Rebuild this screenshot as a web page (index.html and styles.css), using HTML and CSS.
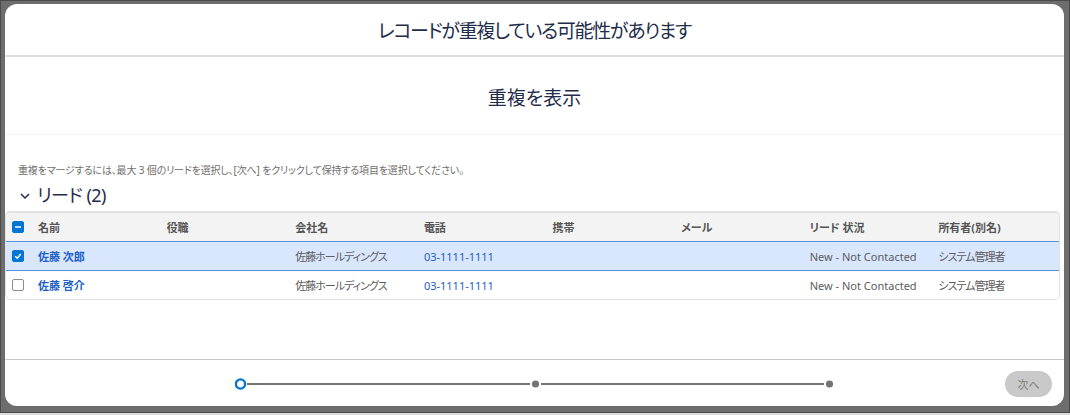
FILE: index.html
```html
<!DOCTYPE html>
<html lang="ja">
<head>
    <meta charset="UTF-8">
    <meta name="viewport" content="width=device-width, initial-scale=1.0">
    <title>重複を表示</title>
    <link rel="stylesheet" href="styles.css">
</head>
<body>
    <div class="screen">
        <div class="modal">
            <header class="modal-header">
                <h2>レコードが重複している可能性があります</h2>
            </header>
            <div class="step-title">
                <h3>重複を表示</h3>
            </div>
            <div class="modal-body">
                <p class="hint">重複をマージするには、最大 3 個のリードを選択し、[次へ] をクリックして保持する項目を選択してください。</p>
                <div class="section-title">
                    <svg class="chevron" width="12" height="12" viewBox="0 0 12 12"><path d="M2 4 L6 8 L10 4" fill="none" stroke="#1f2d4a" stroke-width="1.5"/></svg>
                    <span>リード (2)</span>
                </div>
                <div class="table">
                    <div class="row head">
                        <div class="cell check"><span class="box on"><svg width="12" height="12" viewBox="0 0 12 12"><path d="M3 6 H9" stroke="#fff" stroke-width="1.6"/></svg></span></div>
                        <div class="cell">名前</div>
                        <div class="cell">役職</div>
                        <div class="cell">会社名</div>
                        <div class="cell">電話</div>
                        <div class="cell">携帯</div>
                        <div class="cell">メール</div>
                        <div class="cell">リード 状況</div>
                        <div class="cell">所有者(別名)</div>
                    </div>
                    <div class="row selected">
                        <div class="cell check"><span class="box on"><svg width="12" height="12" viewBox="0 0 12 12"><path d="M3.2 6.2 L5.2 8.2 L8.8 4" fill="none" stroke="#fff" stroke-width="1.5"/></svg></span></div>
                        <div class="cell name">佐藤 次郎</div>
                        <div class="cell"></div>
                        <div class="cell kana">佐藤ホールディングス</div>
                        <div class="cell phone">03-1111-1111</div>
                        <div class="cell"></div>
                        <div class="cell"></div>
                        <div class="cell">New - Not Contacted</div>
                        <div class="cell kana">システム管理者</div>
                    </div>
                    <div class="row">
                        <div class="cell check"><span class="box"></span></div>
                        <div class="cell name">佐藤 啓介</div>
                        <div class="cell"></div>
                        <div class="cell kana">佐藤ホールディングス</div>
                        <div class="cell phone">03-1111-1111</div>
                        <div class="cell"></div>
                        <div class="cell"></div>
                        <div class="cell">New - Not Contacted</div>
                        <div class="cell kana">システム管理者</div>
                    </div>
                </div>
            </div>
            <footer class="modal-footer">
                <div></div>
                <svg class="progress" width="600" height="14" viewBox="0 0 600 14">
                    <line x1="12" y1="7" x2="295" y2="7" stroke="#747474" stroke-width="2"/>
                    <line x1="306" y1="7" x2="589" y2="7" stroke="#747474" stroke-width="2"/>
                    <circle cx="5.5" cy="7" r="4.6" fill="#fff" stroke="#0176d3" stroke-width="2.4"/>
                    <circle cx="300.5" cy="7" r="3.6" fill="#747474"/>
                    <circle cx="594.5" cy="7" r="3.6" fill="#747474"/>
                </svg>
                <button class="next" disabled>次へ</button>
            </footer>
        </div>
    </div>
</body>
</html>
```

FILE: styles.css
```css
body {
    margin: 0;
    background-color: #dcdcdc;
    font-family: "Noto Sans", "Noto Sans CJK JP", sans-serif;
    font-feature-settings: "palt";
}

.screen {
    height: 413px;
    box-sizing: border-box;
    background-color: #6d6d6d;
    border: 1px solid #4b4b4b;
    padding: 3px 5px 0 4px;
}

.modal {
    height: 402px;
    display: flex;
    flex-direction: column;
    background-color: white;
    border-radius: 12px;
    overflow: hidden;
}

.modal-header {
    height: 51px;
    flex: none;
    display: flex;
    align-items: center;
    justify-content: center;
    border-bottom: 2px solid #dcdcdc;
}

.modal-header h2 {
    margin: 0;
    font-size: 19px;
    font-weight: 400;
    letter-spacing: -1.3px;
    color: #1f2d4a;
}

.step-title {
    height: 77px;
    flex: none;
    display: flex;
    align-items: center;
    justify-content: center;
    padding-top: 3px;
    box-sizing: border-box;
}

.step-title h3 {
    margin: 0;
    font-size: 19px;
    font-weight: 400;
    color: #1f2d4a;
}

.modal-body {
    flex: 1;
    border-top: 1px solid #f3f3f3;
    padding-top: 28px;
}

.hint {
    margin: 0 0 0 13px;
    font-size: 10px;
    line-height: 14px;
    letter-spacing: -0.15px;
    color: #706e6b;
}

.section-title {
    display: flex;
    align-items: center;
    gap: 6px;
    margin: 5px 0 5px 14px;
    height: 24px;
    font-size: 18px;
    letter-spacing: -0.5px;
    color: #1f2d4a;
}

.chevron {
    margin-top: 4px;
}

.table {
    margin-right: 4px;
    border: 1px solid #e2e2e2;
    border-top-width: 2px;
    border-radius: 5px;
    overflow: hidden;
}

.row {
    display: grid;
    grid-template-columns: 24px repeat(8, 1fr);
    height: 28px;
    align-items: center;
    font-size: 11px;
    color: #5c5c5c;
}

.row.head {
    background-color: #f3f3f3;
    font-weight: 700;
    color: #555;
}

.row.selected {
    height: 30px;
    box-sizing: border-box;
    background-color: #d8e6fe;
    border-top: 1px solid #5b8fdb;
    border-bottom: 1px solid #5b8fdb;
}

.cell {
    padding-left: 8px;
    white-space: nowrap;
}

.cell.kana {
    letter-spacing: -1px;
}

.cell.check {
    padding-left: 0;
    display: flex;
    justify-content: center;
}

.box {
    width: 12px;
    height: 12px;
    box-sizing: border-box;
    border: 1px solid #8c8c8c;
    border-radius: 2px;
    background-color: white;
    display: flex;
}

.box.on {
    border-color: #0176d3;
    background-color: #0176d3;
}

.box svg {
    margin: -1px;
}

.name {
    font-weight: 700;
    color: #1c5fc7;
}

.phone {
    color: #1c5fc7;
}

.modal-footer {
    height: 47px;
    flex: none;
    box-sizing: border-box;
    border-top: 1px solid #c9c9c9;
    display: grid;
    grid-template-columns: 1fr 600px 1fr;
    align-items: center;
}

.progress {
    display: block;
    margin-top: 1px;
}

.next {
    justify-self: end;
    margin: 1px 12px 0 0;
    width: 47px;
    height: 26px;
    border: none;
    border-radius: 13px;
    background-color: #c9c9c9;
    color: #7b7b7b;
    font-family: inherit;
    font-size: 11px;
}
```
